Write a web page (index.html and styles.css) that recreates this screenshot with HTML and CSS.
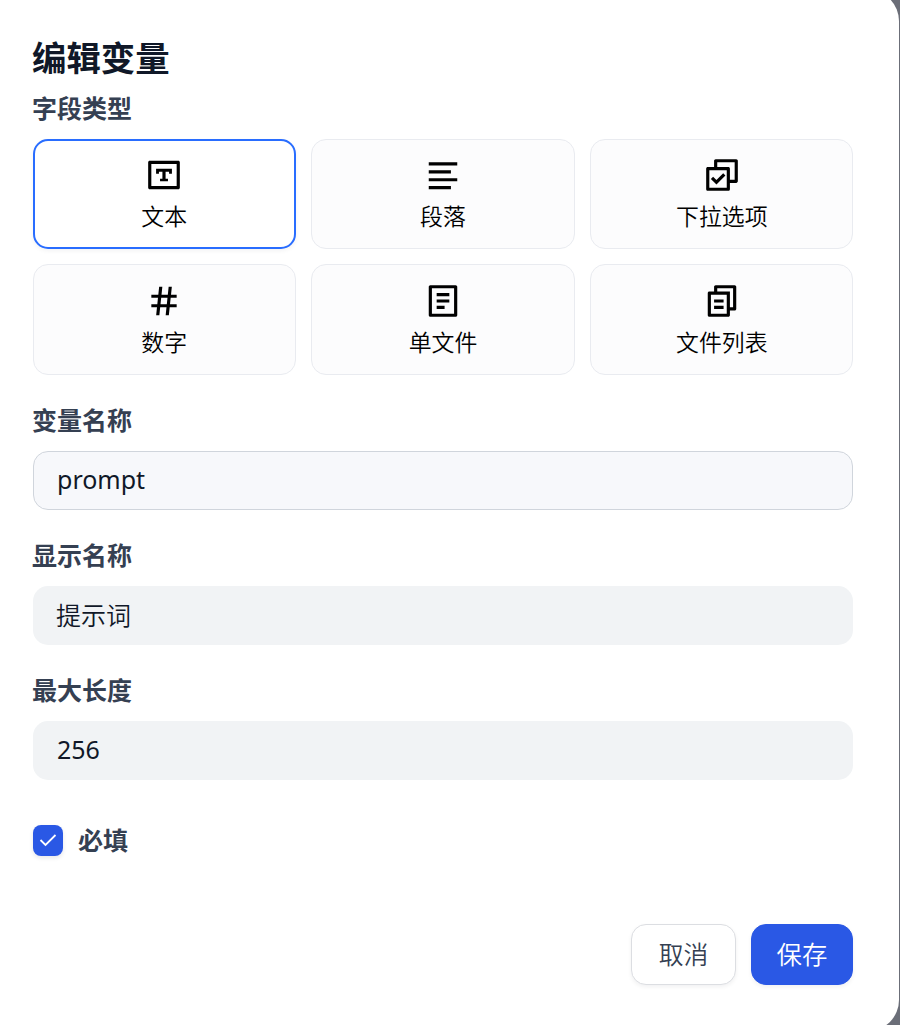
FILE: index.html
```html
<!DOCTYPE html>
<html lang="zh-CN">
<head>
  <meta charset="UTF-8" />
  <title>编辑变量</title>
  <link rel="stylesheet" href="styles.css">
</head>
<body>
  <div class="modal">
    <h1>编辑变量</h1>

    <div class="label">字段类型</div>
    <div class="types">
      <div class="type active">
        <svg viewBox="0 0 24 24"><path fill-rule="evenodd" d="M3 3H21C21.55 3 22 3.45 22 4V20C22 20.55 21.55 21 21 21H3C2.45 21 2 20.55 2 20V4C2 3.45 2.45 3 3 3ZM4 5V19H20V5H4ZM7 8H17V11.2H15.2V10H13V14.3H14.5V16H9.5V14.3H11V10H8.8V11.2H7V8Z"/></svg>
        <span>文本</span>
      </div>
      <div class="type">
        <svg viewBox="0 0 24 24"><path d="M3 4H21V6H3V4ZM3 19H17V21H3V19ZM3 14H21V16H3V14ZM3 9H17V11H3V9Z"/></svg>
        <span>段落</span>
      </div>
      <div class="type">
        <svg viewBox="0 0 24 24"><path d="M7 7V3C7 2.45 7.45 2 8 2H21C21.55 2 22 2.45 22 3V16C22 16.55 21.55 17 21 17H17V20.99C17 21.55 16.55 22 15.99 22H3.01C2.45 22 2 21.55 2 20.99V8.01C2 7.45 2.45 7 3.01 7H7ZM9 7H15.99C16.55 7 17 7.45 17 8.01V15H20V4H9V7ZM4 9V20H15V9H4ZM8.5 18L4.97 14.46L6.38 13.05L8.5 15.17L12.75 10.93L14.16 12.34L8.5 18Z"/></svg>
        <span>下拉选项</span>
      </div>
      <div class="type">
        <svg viewBox="0 0 24 24"><path d="M7.78 14L8.2 10H4V8H8.41L8.94 3H10.95L10.43 8H14.41L14.94 3H16.95L16.43 8H20V10H16.22L15.8 14H20V16H15.59L15.06 21H13.05L13.57 16H9.59L9.06 21H7.05L7.57 16H4V14H7.78ZM9.8 14H13.78L14.2 10H10.22L9.8 14Z"/></svg>
        <span>数字</span>
      </div>
      <div class="type">
        <svg viewBox="0 0 24 24"><path fill-rule="evenodd" d="M4 2H20C20.55 2 21 2.45 21 3V21C21 21.55 20.55 22 20 22H4C3.45 22 3 21.55 3 21V3C3 2.45 3.45 2 4 2ZM5 4V20H19V4H5ZM8 7H16V9H8V7ZM8 11H16V13H8V11ZM8 15H13V17H8V15Z"/></svg>
        <span>单文件</span>
      </div>
      <div class="type">
        <svg viewBox="0 0 24 24"><path d="M7 6V3C7 2.45 7.45 2 8 2H20C20.55 2 21 2.45 21 3V17C21 17.55 20.55 18 20 18H17V21C17 21.55 16.55 22 15.99 22H4.01C3.45 22 3 21.55 3 21V7C3 6.45 3.45 6 4.01 6H7ZM5 8V20H15V8H5ZM9 6H17V16H19V4H9V6ZM7 11H13V13H7V11ZM7 15H13V17H7V15Z"/></svg>
        <span>文件列表</span>
      </div>
    </div>

    <label class="label" for="varName">变量名称</label>
    <input class="focused" type="text" id="varName" value="prompt" />

    <label class="label" for="displayName">显示名称</label>
    <input type="text" id="displayName" value="提示词" />

    <label class="label" for="maxLength">最大长度</label>
    <input type="text" id="maxLength" value="256" />

    <div class="required">
      <span class="checkbox">
        <svg viewBox="0 0 18 14"><path d="M1.5 7L6.5 12L16.5 2"/></svg>
      </span>
      <span class="label">必填</span>
    </div>

    <div class="footer">
      <button class="cancel">取消</button>
      <button class="save">保存</button>
    </div>
  </div>
</body>
</html>
```
FILE: styles.css
```css
* {
  box-sizing: border-box;
  font-family: 'Noto Sans', 'Noto Sans CJK SC', sans-serif;
}
html, body {
  height: 100%;
}
body {
  background: #6b6e78;
  margin: 0;
  overflow: hidden;
}
.modal {
  background: #fff;
  width: 899px;
  height: 1041px;
  margin-top: -10px;
  padding: 45px 46px 0 33px;
  border-radius: 0 31px 31px 0;
  display: flex;
  flex-direction: column;
}
h1 {
  margin: 0 0 0 -1px;
  font-size: 34.4px;
  line-height: 46px;
  font-weight: bold;
  color: #101828;
}
.label {
  display: block;
  margin-left: -1px;
  font-size: 25px;
  line-height: 38px;
  font-weight: bold;
  color: #354052;
}
h1 + .label {
  margin: 8px 0 12px -1px;
}
.types {
  display: grid;
  grid-template-columns: repeat(3, 1fr);
  grid-template-rows: 110px 111px;
  gap: 15px;
  margin-bottom: 26px;
}
.type {
  border: 1px solid #e9ebf0;
  border-radius: 15px;
  background: #fcfcfd;
  display: flex;
  flex-direction: column;
  align-items: center;
  padding-top: 16px;
  font-size: 22.9px;
  font-weight: 350;
  line-height: 34px;
  color: #000;
}
.type.active {
  border: 2px solid #296dff;
  padding-top: 15px;
  background: #fff;
  box-shadow: 0 2px 4px rgba(16, 24, 40, 0.05);
}
.type svg {
  width: 38px;
  height: 38px;
  margin-bottom: 6px;
}
.type:nth-child(n + 4) {
  padding-top: 17px;
}
.type:nth-child(3n + 1) {
  padding-right: 1px;
}
.type:nth-child(3n) {
  padding-left: 1px;
}
input {
  height: 59px;
  margin: 12px 0 26px;
  padding: 0 23px 3px;
  border: 1px solid transparent;
  border-radius: 15px;
  background: #f1f3f5;
  color: #101828;
  font-size: 25px;
  font-weight: 400;
  outline: none;
}
input.focused {
  background: #f7f8fb;
  border-color: #d0d5dc;
}
#displayName {
  padding-left: 22px;
  font-weight: 350;
}
.required {
  display: flex;
  align-items: center;
  gap: 16px;
  margin-top: 15px;
}
.checkbox {
  width: 30px;
  height: 31px;
  border-radius: 8px;
  background: #2a58e5;
  box-shadow: 0 2px 4px rgba(16, 24, 40, 0.1);
  display: flex;
  align-items: center;
  justify-content: center;
}
.checkbox svg {
  width: 18px;
  height: 14px;
  fill: none;
  stroke: #fff;
  stroke-width: 1.8;
}
.footer {
  display: flex;
  justify-content: flex-end;
  gap: 15px;
  margin-top: 65px;
}
button {
  width: 105px;
  height: 61px;
  padding: 0 0 4px;
  border: 1px solid #dcdee2;
  border-radius: 15px;
  background: #fff;
  color: #354052;
  font-size: 24.8px;
  font-weight: 350;
  box-shadow: 0 2px 4px rgba(16, 24, 40, 0.06);
}
button.save {
  width: 102px;
  border-color: #2a58e5;
  background: #2a58e5;
  color: #fff;
  font-size: 25.4px;
}
```
